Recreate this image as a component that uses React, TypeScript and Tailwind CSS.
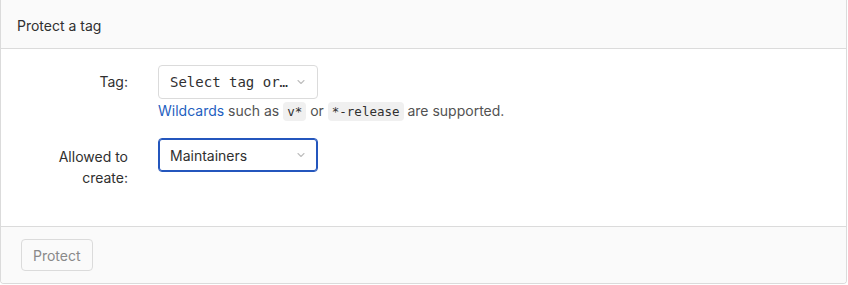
import React from 'react';

const mono = { fontFamily: '"DejaVu Sans Mono", "Liberation Mono", monospace' };

const Chevron: React.FC = () => (
  <svg width="12" height="12" viewBox="0 0 16 16" className="text-[#bfbfbf]" fill="none">
    <path d="M4 6l4 4 4-4" stroke="currentColor" strokeWidth="1.5" strokeLinecap="round" strokeLinejoin="round" />
  </svg>
);

const App: React.FC = () => {
  return (
    <div className="w-[848px] h-[285px] bg-white text-[14px] text-[#303030]" style={{ fontFamily: 'Inter, "Noto Sans", sans-serif' }}>
      <div className="w-[847px] h-[284px] border-x border-b border-[#dbdbdb] rounded-b-[4px] flex flex-col overflow-hidden">
        {/* Header */}
        <div className="h-[49px] bg-[#fafafa] border-b border-[#dbdbdb] px-4 pt-[3px] flex items-center">
          <span className="leading-5">Protect a tag</span>
        </div>

        {/* Body */}
        <div className="flex-1 pt-4 flex flex-col">
          <div className="flex">
            <div className="w-[142px] pr-[15px] text-right pt-[7px] leading-5">Tag:</div>
            <div className="pl-[15px]">
              <button className="w-[160px] h-[34px] border border-[#dbdbdb] rounded-[4px] bg-white flex items-center justify-between pl-[11px] pr-[10px]">
                <span className="text-[14px] text-[#303030]" style={mono}>
                  Select tag or…
                </span>
                <Chevron />
              </button>
              <p className="mt-[2px] leading-5 text-[#525252]">
                <span className="text-[#1f5fbf]">Wildcards</span> such as{' '}
                <code className="bg-[#f0f0f0] rounded-[4px] px-[4px] py-[2px] text-[12.5px] text-[#303030]" style={mono}>v*</code>{' '}
                or{' '}
                <code className="bg-[#f0f0f0] rounded-[4px] px-[4px] py-[2px] text-[12.5px] text-[#303030]" style={mono}>*-release</code>{' '}
                are supported.
              </p>
            </div>
          </div>

          <div className="flex mt-4">
            <div className="w-[142px] pr-[15px] text-right pt-[8px] leading-[21px]">
              Allowed to
              <br />
              create:
            </div>
            <div className="pl-[15px]">
              <button className="w-[160px] h-[34px] border border-[#2456bd] ring-1 ring-inset ring-[#2456bd] rounded-[4px] bg-white flex items-center justify-between pl-[11px] pr-[10px]">
                <span className="text-[14px] text-[#303030]">Maintainers</span>
                <Chevron />
              </button>
            </div>
          </div>
        </div>

        {/* Footer */}
        <div className="h-[57px] bg-[#fafafa] border-t border-[#dbdbdb] px-5 pt-3">
          <button className="h-[32px] px-[11px] border border-[#dbdbdb] rounded-[4px] bg-[#fafafa] text-[#898989] text-[14px]">
            Protect
          </button>
        </div>
      </div>
    </div>
  );
};

export default App;
